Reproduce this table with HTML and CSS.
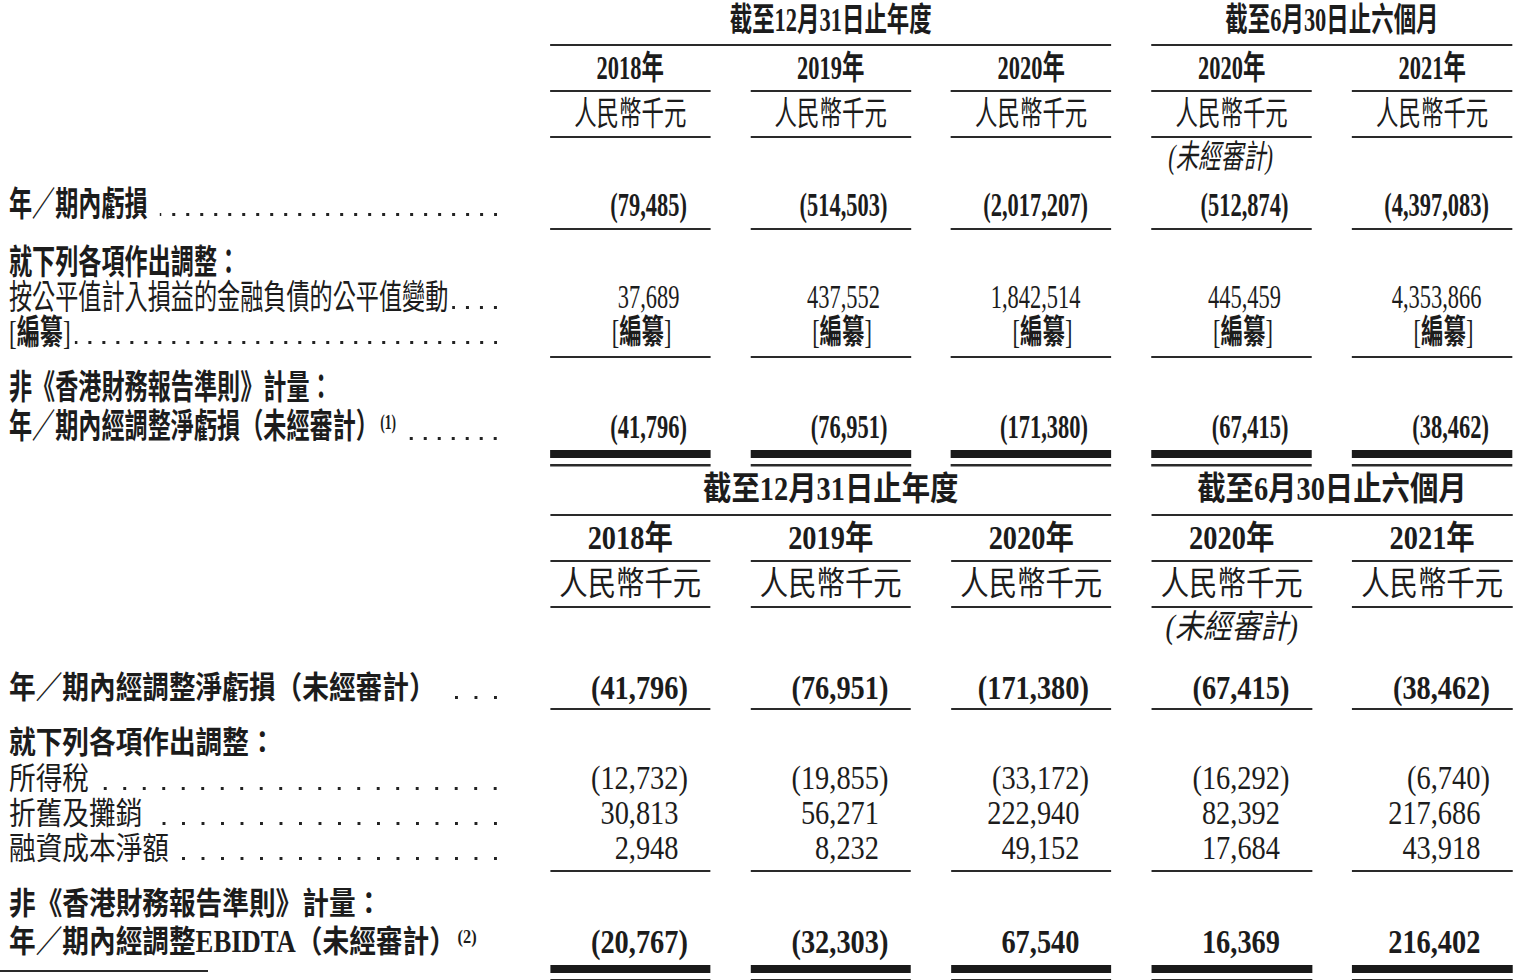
FILE: index.html
```html
<!DOCTYPE html>
<html lang="zh-Hant">
<head>
<meta charset="utf-8">
<title>非香港財務報告準則計量</title>
<link rel="stylesheet" href="styles.css">
</head>
<body>
<div class="sheet">

  <section class="sect top">
    <div class="grid">
      <div class="row hg">
        <div></div>
        <div class="grp span3">截至12月31日止年度</div>
        <div class="grp span2">截至6月30日止六個月</div>
      </div>
      <div class="row hy">
        <div></div>
        <div class="hd b ln">2018年</div>
        <div class="hd b ln">2019年</div>
        <div class="hd b ln">2020年</div>
        <div class="hd b ln">2020年</div>
        <div class="hd b ln">2021年</div>
      </div>
      <div class="row hu">
        <div></div>
        <div class="hd ln">人民幣千元</div>
        <div class="hd ln">人民幣千元</div>
        <div class="hd ln">人民幣千元</div>
        <div class="hd ln">人民幣千元</div>
        <div class="hd ln">人民幣千元</div>
      </div>
      <div class="row hn">
        <div></div><div></div><div></div><div></div>
        <div class="hd note">(未經審計)</div>
        <div></div>
      </div>
      <div class="row r1">
        <div class="lab b"><span class="lt">年／期內虧損</span><span class="dots gap"></span></div>
        <div class="v b ln"><span class="n neg">(79,485)</span></div>
        <div class="v b ln"><span class="n neg">(514,503)</span></div>
        <div class="v b ln"><span class="n neg">(2,017,207)</span></div>
        <div class="v b ln"><span class="n neg">(512,874)</span></div>
        <div class="v b ln"><span class="n neg">(4,397,083)</span></div>
      </div>
      <div class="row rh">
        <div class="lab b"><span class="lt">就下列各項作出調整：</span></div>
        <div></div><div></div><div></div><div></div><div></div>
      </div>
      <div class="row rr">
        <div class="lab"><span class="lt">按公平值計入損益的金融負債的公平值變動</span><span class="dots"></span></div>
        <div class="v"><span class="n">37,689</span></div>
        <div class="v"><span class="n">437,552</span></div>
        <div class="v"><span class="n">1,842,514</span></div>
        <div class="v"><span class="n">445,459</span></div>
        <div class="v"><span class="n">4,353,866</span></div>
      </div>
      <div class="row rl">
        <div class="lab"><span class="lt">[<b>編纂</b>]</span><span class="dots"></span></div>
        <div class="v ln"><span class="n rd">[<b>編纂</b>]</span></div>
        <div class="v ln"><span class="n rd">[<b>編纂</b>]</span></div>
        <div class="v ln"><span class="n rd">[<b>編纂</b>]</span></div>
        <div class="v ln"><span class="n rd">[<b>編纂</b>]</span></div>
        <div class="v ln"><span class="n rd">[<b>編纂</b>]</span></div>
      </div>
      <div class="row rh2">
        <div class="lab b"><span class="lt">非《香港財務報告準則》計量：</span></div>
        <div></div><div></div><div></div><div></div><div></div>
      </div>
      <div class="row rt">
        <div class="lab b"><span class="lt">年／期內經調整淨虧損（未經審計）<sup class="fn">(1)</sup></span><span class="dots"></span></div>
        <div class="v b dbl"><span class="n neg">(41,796)</span></div>
        <div class="v b dbl"><span class="n neg">(76,951)</span></div>
        <div class="v b dbl"><span class="n neg">(171,380)</span></div>
        <div class="v b dbl"><span class="n neg">(67,415)</span></div>
        <div class="v b dbl"><span class="n neg">(38,462)</span></div>
      </div>
    </div>
  </section>

  <section class="sect bottom">
    <div class="grid">
      <div class="row hg">
        <div></div>
        <div class="grp span3">截至12月31日止年度</div>
        <div class="grp span2">截至6月30日止六個月</div>
      </div>
      <div class="row hy">
        <div></div>
        <div class="hd b ln">2018年</div>
        <div class="hd b ln">2019年</div>
        <div class="hd b ln">2020年</div>
        <div class="hd b ln">2020年</div>
        <div class="hd b ln">2021年</div>
      </div>
      <div class="row hu">
        <div></div>
        <div class="hd ln">人民幣千元</div>
        <div class="hd ln">人民幣千元</div>
        <div class="hd ln">人民幣千元</div>
        <div class="hd ln">人民幣千元</div>
        <div class="hd ln">人民幣千元</div>
      </div>
      <div class="row hn">
        <div></div><div></div><div></div><div></div>
        <div class="hd note">(未經審計)</div>
        <div></div>
      </div>
      <div class="row r1">
        <div class="lab b"><span class="lt">年／期內經調整淨虧損（未經審計）</span><span class="dots"></span></div>
        <div class="v b ln"><span class="n neg">(41,796)</span></div>
        <div class="v b ln"><span class="n neg">(76,951)</span></div>
        <div class="v b ln"><span class="n neg">(171,380)</span></div>
        <div class="v b ln"><span class="n neg">(67,415)</span></div>
        <div class="v b ln"><span class="n neg">(38,462)</span></div>
      </div>
      <div class="row rh">
        <div class="lab b"><span class="lt">就下列各項作出調整：</span></div>
        <div></div><div></div><div></div><div></div><div></div>
      </div>
      <div class="row rr">
        <div class="lab"><span class="lt">所得稅</span><span class="dots gap"></span></div>
        <div class="v"><span class="n neg">(12,732)</span></div>
        <div class="v"><span class="n neg">(19,855)</span></div>
        <div class="v"><span class="n neg">(33,172)</span></div>
        <div class="v"><span class="n neg">(16,292)</span></div>
        <div class="v"><span class="n neg">(6,740)</span></div>
      </div>
      <div class="row rr">
        <div class="lab"><span class="lt">折舊及攤銷</span><span class="dots"></span></div>
        <div class="v"><span class="n">30,813</span></div>
        <div class="v"><span class="n">56,271</span></div>
        <div class="v"><span class="n">222,940</span></div>
        <div class="v"><span class="n">82,392</span></div>
        <div class="v"><span class="n">217,686</span></div>
      </div>
      <div class="row rl">
        <div class="lab"><span class="lt">融資成本淨額</span><span class="dots"></span></div>
        <div class="v ln"><span class="n">2,948</span></div>
        <div class="v ln"><span class="n">8,232</span></div>
        <div class="v ln"><span class="n">49,152</span></div>
        <div class="v ln"><span class="n">17,684</span></div>
        <div class="v ln"><span class="n">43,918</span></div>
      </div>
      <div class="row rh2">
        <div class="lab b"><span class="lt">非《香港財務報告準則》計量：</span></div>
        <div></div><div></div><div></div><div></div><div></div>
      </div>
      <div class="row rt">
        <div class="lab b foot"><span class="lt">年／期內經調整EBIDTA（未經審計）<sup class="fn">(2)</sup></span></div>
        <div class="v b dbl"><span class="n neg">(20,767)</span></div>
        <div class="v b dbl"><span class="n neg">(32,303)</span></div>
        <div class="v b dbl"><span class="n">67,540</span></div>
        <div class="v b dbl"><span class="n">16,369</span></div>
        <div class="v b dbl"><span class="n">216,402</span></div>
      </div>
    </div>
  </section>

</div>
</body>
</html>
```

FILE: styles.css
```css
html, body {
  margin: 0;
  padding: 0;
  background: #ffffff;
  overflow: hidden;
}

body {
  font-family: "Liberation Serif", "Noto Sans CJK TC", serif;
  color: #1c1c1c;
}

.sheet {
  width: 1520px;
}

/* Each block is typeset in a condensed face: lay it out wide, then squeeze horizontally */
.sect {
  width: calc(1520px / var(--s));
  transform: scaleX(var(--s));
  transform-origin: 0 0;
  font-size: 33px;
  --rule: #2a2a2a;
}

.top {
  --s: 0.68;
  --lab-size: 34px;
  --dot-step: calc(14px / var(--s));
  --num-pad: calc(31px / var(--s));
  --fn-size: 20px;
}

.bottom {
  --s: 0.86;
  --lab-size: 31px;
  --dot-step: calc(19.5px / var(--s));
  --num-pad: calc(32px / var(--s));
  --fn-size: 19px;
}

.grid {
  display: grid;
  grid-template-columns: calc(510px / var(--s)) repeat(5, calc(160.5px / var(--s)));
  column-gap: calc(40px / var(--s));
}

.row {
  display: contents;
}

.b { font-weight: bold; }
b { font-weight: bold; }

/* header cells */
.grp {
  text-align: center;
  font-weight: bold;
  border-bottom: 2px solid var(--rule);
  white-space: nowrap;
}
.span3 { grid-column: span 3; }
.span2 { grid-column: span 2; }

.hd {
  text-align: center;
  white-space: nowrap;
}
.ln {
  border-bottom: 2px solid var(--rule);
}
.note {
  font-style: italic;
  font-weight: normal;
}
.top .note {
  padding-right: calc(22px / var(--s));
}

/* label cells */
.lab {
  display: flex;
  font-size: var(--lab-size);
  padding-left: calc(9px / var(--s));
  padding-right: calc(13px / var(--s));
  white-space: nowrap;
}
.lt {
  flex: none;
}
.dots {
  flex: 1;
  min-width: 0;
  margin-left: calc(4px / var(--s));
  background-image: linear-gradient(90deg, transparent calc(100% - 2.7px / var(--s)), #222 0);
  background-size: var(--dot-step) 2.6px;
  background-repeat: repeat-x;
  background-position: right 0 bottom 6px;
}
.dots.gap {
  margin-left: calc(12px / var(--s));
}
.fn {
  font-size: var(--fn-size);
  vertical-align: 9px;
  line-height: 0;
  font-family: "Liberation Serif", serif;
  font-weight: bold;
  margin-left: 2px;
}

/* value cells */
.v {
  text-align: right;
  white-space: nowrap;
}
.n {
  margin-right: var(--num-pad);
}
.n.neg {
  margin-right: calc(var(--num-pad) - 0.333em);
}
.n.rd {
  margin-right: calc(var(--num-pad) + 8px / var(--s));
}
.dbl {
  background:
    linear-gradient(var(--rule), var(--rule)) left 0 bottom 0 / 100% 2.5px no-repeat,
    linear-gradient(#1a1a1a, #1a1a1a) left 0 bottom 8.5px / 100% 8px no-repeat;
}

/* ---------- row metrics: top block ---------- */
.top .hg > * { height: 40px; line-height: 40px; padding-bottom: 4px; }
.top .hy > * { height: 44px; line-height: 44px; }
.top .hu > * { height: 44px; line-height: 44px; }
.top .hn > * { height: 38px; line-height: 38px; }
.top .r1 > * { padding-top: 12px; height: 34px; line-height: 34px; padding-bottom: 6px; }
.top .rh > * { padding-top: 15px; height: 35px; line-height: 35px; }
.top .rr > * { height: 35px; line-height: 35px; }
.top .rl > * { height: 35px; line-height: 35px; padding-bottom: 6px; }
.top .rh2 > * { padding-top: 12px; height: 36px; line-height: 36px; }
.top .rt > * { padding-top: 2px; height: 38px; line-height: 38px; padding-bottom: 2px; }
.top .rt > .dbl { padding-bottom: 20.5px; }

/* ---------- row metrics: bottom block ---------- */
.bottom .hg > * { height: 44px; line-height: 44px; padding-bottom: 3px; }
.bottom .hy > * { height: 44px; line-height: 44px; }
.bottom .hu > * { height: 44px; line-height: 44px; }
.bottom .hn > * { height: 39px; line-height: 39px; }
.bottom .r1 > * { padding-top: 24px; height: 34px; line-height: 34px; padding-bottom: 3px; }
.bottom .rh > * { padding-top: 15px; height: 36px; line-height: 36px; }
.bottom .rr > * { height: 35px; line-height: 35px; }
.bottom .rl > * { height: 35px; line-height: 35px; padding-bottom: 4px; }
.bottom .rh2 > * { padding-top: 14px; height: 36px; line-height: 36px; }
.bottom .rt > * { padding-top: 1px; height: 38px; line-height: 38px; padding-bottom: 2px; }
.bottom .rt > .dbl { padding-bottom: 20.5px; }

.foot {
  padding-bottom: 11.5px !important;
  background: linear-gradient(var(--rule), var(--rule)) left 0 bottom 0 / calc(208px / var(--s)) 2px no-repeat;
}
```
